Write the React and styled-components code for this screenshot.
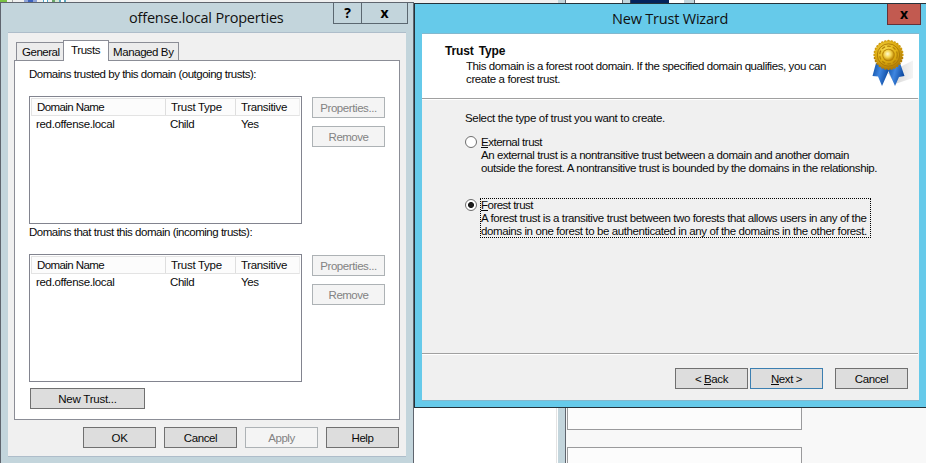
import React from 'react';
import styled, { createGlobalStyle } from 'styled-components';

const GlobalStyle = createGlobalStyle`
  *, *::before, *::after { box-sizing: border-box; }
  body { margin: 0; overflow: hidden; }
  button { font: inherit; padding: 0; margin: 0; border-radius: 0; }
`;

const Desktop = styled.div`
  position: relative;
  width: 926px;
  height: 463px;
  overflow: hidden;
  display: flex;
  flex-direction: column;
  justify-content: space-between;
  background: #fff;
  color: #0a0a0a;
  font: 11.5px/13px "Liberation Sans", Arial, sans-serif;
`;

/* Windows behind the dialogs */
const TopStrip = styled.div`
  display: flex;
  height: 3px;
`;
const Strip = styled.div`
  flex: none;
  width: ${(p) => p.$w}px;
  background: ${(p) => p.$c};
`;
const BackWindows = styled.div`
  display: flex;
  height: 56px;
  padding-left: 414px;
`;
const BackForm = styled.div`
  flex: 1;
  display: flex;
  flex-direction: column;
  gap: 17px;
  padding-left: 1px;
  background: #f8f8f8;
`;
const BackField = styled.div`
  flex: none;
  width: 235px;
  height: ${(p) => p.$h}px;
  border: 1px solid #9a9a9c;
  background: #fcfcfc;
`;

/* Window chrome */
const Window = styled.section`
  position: absolute;
  display: flex;
  flex-direction: column;
`;
const PropertiesWindow = styled(Window)`
  left: 0;
  top: 2px;
  width: 414px;
  height: 480px;
  border: 1px solid #5f656e;
  background: #c3d5dc;
`;
const WizardWindow = styled(Window)`
  left: 414px;
  top: 3px;
  width: 513px;
  height: 405px;
  border: 1px solid #24323a;
  background: #66caea;
`;
const TitleBar = styled.header`
  flex: none;
  display: flex;
  justify-content: flex-end;
  align-items: flex-start;
  height: 29px;
  padding-right: ${(p) => p.$right}px;
`;
const Title = styled.h1`
  flex: 1;
  margin: 0;
  padding-left: ${(p) => p.$left}px;
  padding-top: ${(p) => p.$top}px;
  font: 14.5px/20px "Open Sans", "Noto Sans", sans-serif;
  letter-spacing: -0.2px;
  color: #111;
  white-space: pre;
`;
const CaptionButton = styled.button`
  width: ${(p) => p.$w}px;
  height: 21px;
  border: 1px solid ${(p) => (p.$danger ? '#643239' : '#5b6770')};
  border-top: 0;
  margin-left: -1px;
  display: flex;
  align-items: center;
  justify-content: center;
  background: ${(p) => (p.$danger ? '#c25a50' : 'transparent')};
  color: #000;
  font: bold 14px/18px "Open Sans", sans-serif;
`;

/* Shared controls */
const Text = styled.span`
  display: block;
  white-space: pre;
  letter-spacing: ${(p) => p.$ls ?? -0.42}px;
`;
const Button = styled.button`
  flex: none;
  width: ${(p) => p.$w ?? 73}px;
  height: 21px;
  display: flex;
  align-items: center;
  justify-content: center;
  padding-top: 1px;
  border: 1px solid ${(p) => (p.disabled ? '#adb2b5' : p.$primary ? '#3c7fb1' : '#707070')};
  background: ${(p) => (p.disabled ? '#f4f4f4' : '#dddddd')};
  color: ${(p) => (p.disabled ? '#838383' : '#0a0a0a')};
`;
const Key = styled.span`
  border-bottom: 1px solid #0a0a0a;
  display: inline-block;
  height: 12px;
  line-height: 13px;
`;

/* Properties dialog */
const PropertiesClient = styled.div`
  width: 398px;
  height: 425px;
  margin-left: 7px;
  padding: 7px 6px 0;
  border: solid #aebdca;
  border-width: 1px 0;
  background: #f0f0f0;
`;
const TabStrip = styled.nav`
  display: flex;
  align-items: flex-end;
  height: 20px;
  padding-left: 2px;
`;
const Tab = styled.div`
  position: relative;
  z-index: ${(p) => (p.$active ? 1 : 0)};
  width: ${(p) => p.$w}px;
  height: ${(p) => (p.$active ? 21 : 18)}px;
  margin: ${(p) => (p.$active ? '0 -1px -1px' : '0')};
  padding-top: 3px;
  padding-left: ${(p) => p.$pad}px;
  border: 1px solid #8b8d96;
  border-bottom: 0;
  background: ${(p) => (p.$active ? '#fff' : '#ececec')};
`;
const TabPage = styled.div`
  width: 386px;
  height: 360px;
  padding: 7px 0 0 14px;
  border: 1px solid #8b8d96;
  background: #fff;
`;
const TrustSection = styled.section`
  height: 158px;
`;
const SectionBody = styled.div`
  display: flex;
  gap: 10px;
  margin-top: 15px;
`;
const ButtonColumn = styled.div`
  display: flex;
  flex-direction: column;
  gap: 8px;
  padding-top: 1px;
`;
const ListView = styled.div`
  width: 273px;
  height: 128px;
  border: 1px solid #82848f;
  padding: 1px;
`;
const ListHeader = styled.div`
  display: grid;
  grid-template-columns: 134px 70px 1fr;
  height: 18px;
  border: 1px solid #e3e3e3;
  border-right-color: #ededed;
  background: #fcfcfc;
`;
const HeaderCell = styled.div`
  padding: 2px 0 0 5px;
  border-right: 1px solid #dedede;
  &:last-child { border-right: 0; }
`;
const ListRow = styled.div`
  display: grid;
  grid-template-columns: 134px 71px 1fr;
  padding: 2px 0 0 5px;
`;
const NewTrust = styled.div`
  padding: 4px 0 0 1px;
`;
const DialogActions = styled.footer`
  display: flex;
  justify-content: flex-end;
  gap: 8px;
  padding: 7px 1px 0 0;
`;

/* Wizard dialog */
const WizardClient = styled.div`
  width: 497px;
  height: 368px;
  margin-left: 7px;
  border: solid #83b8ce;
  border-width: 1px 0;
  display: flex;
  flex-direction: column;
  background: #f0f0f0;
`;
const Banner = styled.header`
  height: 64px;
  flex: none;
  display: flex;
  justify-content: space-between;
  padding: 11px 4px 0 23px;
  background: #fff;
`;
const BannerTitle = styled.h2`
  margin: 0 0 2px;
  font: bold 12px/13px "Liberation Sans", Arial, sans-serif;
  letter-spacing: -0.15px;
  word-spacing: 2px;
`;
const BannerText = styled.div`
  padding-left: 21px;
`;
const MedalSlot = styled.div`
  flex: none;
  margin-top: -6px;
  height: 50px;
`;
const Divider = styled.div`
  flex: none;
  width: 496px;
  height: 2px;
  border-top: 1px solid #a0a0a0;
  background: #fff;
`;
const WizardPage = styled.main`
  height: 253px;
  padding: 12px 0 0 43px;
`;
const Option = styled.label`
  display: flex;
  align-items: flex-start;
  margin-top: ${(p) => p.$mt}px;
`;
const Radio = styled.span`
  flex: none;
  width: 12px;
  height: 12px;
  margin: 1px 3px 0 0;
  border: 1px solid #6e6e6e;
  border-radius: 50%;
  background: ${(p) => (p.$checked ? 'radial-gradient(circle, #1c1c1c 0 2.6px, #fff 3.4px)' : '#fff')};
`;
const OptionText = styled.div`
  width: 391px;
  height: 40px;
  padding: 1px 0 0 1px;
  ${(p) => p.$focused && 'outline: 1px dotted #000; outline-offset: -1px;'}
`;
const WizardActions = styled.footer`
  display: flex;
  padding: 13px 11px 0 0;
  justify-content: flex-end;
`;
const Gap = styled.span`
  width: ${(p) => p.$w}px;
`;

const teeth = Array.from({ length: 28 }, (_, i) => {
  const a = (i * Math.PI * 2) / 28;
  return [17.5 + 13.8 * Math.cos(a), 16 + 13.8 * Math.sin(a)];
});

function Medal() {
  return (
    <svg width="44" height="50" viewBox="0 0 44 50">
      <defs>
        <radialGradient id="gold" cx="40%" cy="32%" r="72%">
          <stop offset="0" stopColor="#f6d94e" />
          <stop offset="0.55" stopColor="#dfae12" />
          <stop offset="1" stopColor="#ad7704" />
        </radialGradient>
        <radialGradient id="boss" cx="42%" cy="40%" r="60%">
          <stop offset="0" stopColor="#fffbd2" />
          <stop offset="0.55" stopColor="#f3d24d" />
          <stop offset="1" stopColor="#c08a08" />
        </radialGradient>
        <linearGradient id="ribbon" x1="0" x2="1" y1="0" y2="0.35">
          <stop offset="0" stopColor="#0a4a9f" />
          <stop offset="0.5" stopColor="#3f86e0" />
          <stop offset="1" stopColor="#0d49a0" />
        </linearGradient>
        <linearGradient id="shade" x1="0" x2="1">
          <stop offset="0" stopColor="#cfcfcf" />
          <stop offset="1" stopColor="#f4f4f4" />
        </linearGradient>
      </defs>
      <path d="M17 34L42 21.500V39L24 45Z" fill="url(#shade)" />
      <path d="M5 24L1.500 37L7 37.500L11 47L18.500 30Z" fill="url(#ribbon)" />
      <path d="M29 24L33.500 37L28 38L24 47L16.500 30Z" fill="url(#ribbon)" />
      {teeth.map(([x, y], i) => (
        <circle key={i} cx={x} cy={y} r="1.4" fill={y > 16 ? '#b47e06' : '#cf9b0e'} />
      ))}
      <circle cx="17.500" cy="16" r="13.7" fill="url(#gold)" />
      <circle cx="17.500" cy="16" r="11.2" fill="none" stroke="#a97706" strokeWidth="0.9" />
      <circle cx="17.500" cy="16" r="8.8" fill="none" stroke="#b28108" strokeWidth="1.2" strokeDasharray="3.5 2.2" />
      <circle cx="17.500" cy="16" r="6.3" fill="#b98508" />
      <circle cx="17.500" cy="16" r="5.4" fill="url(#boss)" />
    </svg>
  );
}

const topStrip = [
  [7, '#79c142'], [5, '#eef2ea'], [1, '#a5a5a5'], [11, '#f0f0f0'], [4, '#8fa4d8'], [5, '#3d62bd'],
  [4, '#8fa4d8'], [6, '#f0f0f0'], [1, '#49a8cc'], [3, '#fff'], [1, '#49a8cc'], [4, '#f0f0f0'],
  [3, '#69a66b'], [4, '#d5e8d2'], [2, '#5ba6bf'], [3, '#fff'], [2, '#5ba6bf'], [492, '#f0f0f0'],
  [7, '#c3d5dc'], [1, '#5f656e'], [56, '#fff'], [1, '#5f656e'], [7, '#c3d5dc'], [1, '#33415f'],
  [38, '#03235c'], [15, '#fff'], [10, '#c3d5dc'], [1, '#5f656e'], [231, '#fff'],
];
const bottomStrip = [[142, '#fff'], [1, '#e3e3e3'], [1, '#fff'], [7, '#c3d5dc'], [1, '#5f656e']];

function TrustList({ label }) {
  return (
    <TrustSection>
      <Text $ls={-0.48}>{label}</Text>
      <SectionBody>
        <ListView>
          <ListHeader>
            <HeaderCell><Text $ls={-0.59}>Domain Name</Text></HeaderCell>
            <HeaderCell><Text $ls={-0.29}>Trust Type</Text></HeaderCell>
            <HeaderCell><Text $ls={-0.34}>Transitive</Text></HeaderCell>
          </ListHeader>
          <ListRow>
            <Text $ls={-0.33}>red.offense.local</Text>
            <Text>Child</Text>
            <Text>Yes</Text>
          </ListRow>
        </ListView>
        <ButtonColumn>
          <Button disabled><Text $ls={-0.42}>Properties...</Text></Button>
          <Button disabled><Text $ls={-0.5}>Remove</Text></Button>
        </ButtonColumn>
      </SectionBody>
    </TrustSection>
  );
}

export default function App() {
  return (
    <Desktop>
      <GlobalStyle />
      <TopStrip>
        {topStrip.map(([w, c], i) => <Strip key={i} $w={w} $c={c} />)}
      </TopStrip>
      <BackWindows>
        {bottomStrip.map(([w, c], i) => <Strip key={i} $w={w} $c={c} />)}
        <BackForm>
          <BackField $h={23} />
          <BackField $h={40} />
        </BackForm>
      </BackWindows>

      <PropertiesWindow>
        <TitleBar $right={5}>
          <Title $left={128} $top={5}>offense.local Properties</Title>
          <CaptionButton $w={29}>?</CaptionButton>
          <CaptionButton $w={47}>x</CaptionButton>
        </TitleBar>
        <PropertiesClient>
          <TabStrip>
            <Tab $w={48} $pad={5}><Text $ls={-0.48}>General</Text></Tab>
            <Tab $w={46} $pad={7} $active><Text $ls={-0.4}>Trusts</Text></Tab>
            <Tab $w={71} $pad={4}><Text $ls={-0.41}>Managed By</Text></Tab>
          </TabStrip>
          <TabPage>
            <TrustList label="Domains trusted by this domain (outgoing trusts):" />
            <TrustList label="Domains that trust this domain (incoming trusts):" />
            <NewTrust><Button $w={115}><Text $ls={-0.25}>New Trust...</Text></Button></NewTrust>
          </TabPage>
          <DialogActions>
            <Button><Text>OK</Text></Button>
            <Button><Text $ls={-0.38}>Cancel</Text></Button>
            <Button disabled><Text>Apply</Text></Button>
            <Button><Text>Help</Text></Button>
          </DialogActions>
        </PropertiesClient>
      </PropertiesWindow>

      <WizardWindow>
        <TitleBar $right={5}>
          <Title $left={197} $top={5}>New Trust Wizard</Title>
          <CaptionButton $w={34} $danger>x</CaptionButton>
        </TitleBar>
        <WizardClient>
          <Banner>
            <div>
              <BannerTitle>Trust Type</BannerTitle>
              <BannerText>
                <Text $ls={-0.42}>This domain is a forest root domain. If the specified domain qualifies, you can</Text>
                <Text $ls={-0.37}>create a forest trust.</Text>
              </BannerText>
            </div>
            <MedalSlot><Medal /></MedalSlot>
          </Banner>
          <Divider />
          <WizardPage>
            <Text $ls={-0.34}>Select the type of trust you want to create.</Text>
            <Option $mt={10}>
              <Radio />
              <OptionText>
                <Text $ls={-0.48}><Key>E</Key>xternal trust</Text>
                <Text $ls={-0.43}>An external trust is a nontransitive trust between a domain and another domain</Text>
                <Text $ls={-0.41}>outside the forest. A nontransitive trust is bounded by the domains in the relationship.</Text>
              </OptionText>
            </Option>
            <Option $mt={23}>
              <Radio $checked />
              <OptionText $focused>
                <Text $ls={-0.52}><Key>F</Key>orest trust</Text>
                <Text $ls={-0.4}>A forest trust is a transitive trust between two forests that allows users in any of the</Text>
                <Text $ls={-0.4}>domains in one forest to be authenticated in any of the domains in the other forest.</Text>
              </OptionText>
            </Option>
          </WizardPage>
          <Divider />
          <WizardActions>
            <Button><Text>&lt; <Key>B</Key>ack</Text></Button>
            <Gap $w={2} />
            <Button $primary><Text><Key>N</Key>ext &gt;</Text></Button>
            <Gap $w={12} />
            <Button><Text $ls={-0.38}>Cancel</Text></Button>
          </WizardActions>
        </WizardClient>
      </WizardWindow>
    </Desktop>
  );
}
